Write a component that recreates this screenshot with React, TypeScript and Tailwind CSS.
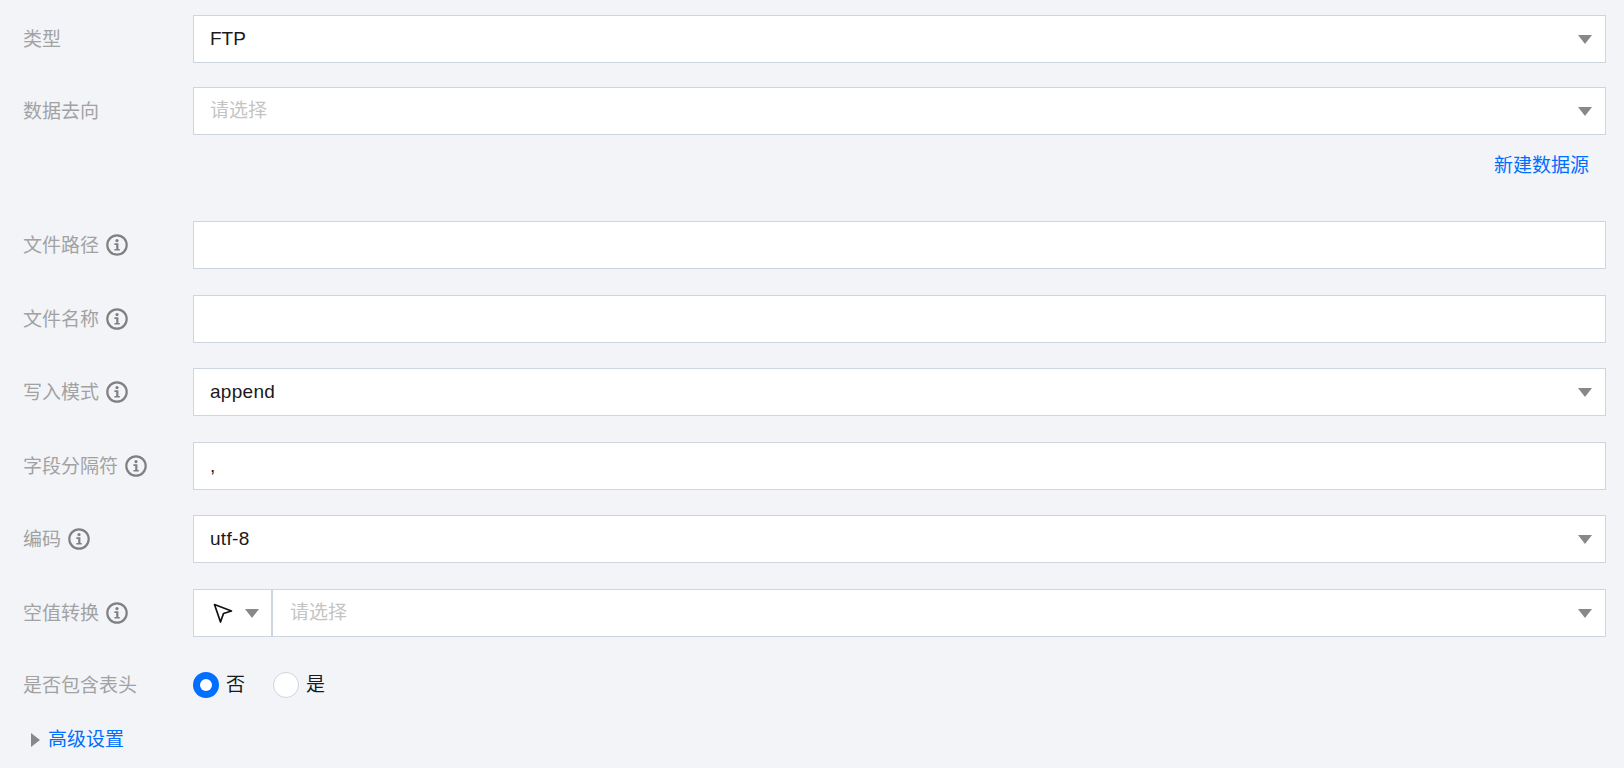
import React from "react";

const Caret = () => (
  <svg width="14" height="9" viewBox="0 0 14 9" className="shrink-0">
    <path d="M0 0H14L7 9Z" fill="#888888" />
  </svg>
);

const InfoIcon = () => (
  <svg width="22" height="22" viewBox="0 0 22 22" className="ml-[7px] shrink-0">
    <circle cx="11" cy="11" r="9.7" fill="none" stroke="#808080" strokeWidth="2.2" />
    <circle cx="11" cy="6.6" r="1.6" fill="#808080" />
    <path d="M8.4 9.3H12.4V15H13.8V16.6H8.4V15H10.2V10.9H8.4Z" fill="#808080" />
  </svg>
);

const Label = ({ text, info }: { text: string; info?: boolean }) => (
  <div className="flex w-[193px] shrink-0 items-center pl-[23px] text-[19px] text-[#a2a2a2]">
    <span className="pt-[2px]">{text}</span>
    {info && <InfoIcon />}
  </div>
);

const Box = ({ children }: { children?: React.ReactNode }) => (
  <div className="flex h-[48px] flex-1 items-center justify-between border border-[#cfd5de] bg-white pl-[16px] pr-[13px] text-[19px] text-[#1a1a1a]">
    {children}
  </div>
);

const Select = ({ value, wide }: { value?: string; wide?: boolean }) => (
  <Box>
    {value ? (
      <span className={wide ? "tracking-[0.3px]" : ""}>{value}</span>
    ) : (
      <span className="pt-px text-[#c4c4c4]">请选择</span>
    )}
    <Caret />
  </Box>
);

const Row = ({ className, children }: { className?: string; children: React.ReactNode }) => (
  <div className={`flex items-center pr-[18px] ${className ?? ""}`}>{children}</div>
);

export default function App() {
  return (
    <div
      className="h-[768px] w-[1624px] overflow-hidden bg-[#f2f4f8] pt-[15px]"
      style={{ fontFamily: '"Liberation Sans", "Noto Sans CJK SC", sans-serif' }}
    >
      <Row>
        <Label text="类型" />
        <Select value="FTP" />
      </Row>
      <Row className="mt-[24px]">
        <Label text="数据去向" />
        <Select />
      </Row>
      <div className="mt-[17px] flex h-[27px] justify-end pr-[35px] text-[19px] leading-[27px] text-[#006eff]">
        新建数据源
      </div>
      <Row className="mt-[42px]">
        <Label text="文件路径" info />
        <Box />
      </Row>
      <Row className="mt-[26px]">
        <Label text="文件名称" info />
        <Box />
      </Row>
      <Row className="mt-[25px]">
        <Label text="写入模式" info />
        <Select value="append" wide />
      </Row>
      <Row className="mt-[26px]">
        <Label text="字段分隔符" info />
        <Box>
          <span>,</span>
        </Box>
      </Row>
      <Row className="mt-[25px]">
        <Label text="编码" info />
        <Select value="utf-8" wide />
      </Row>
      <Row className="mt-[26px]">
        <Label text="空值转换" info />
        <div className="flex h-[48px] w-[80px] shrink-0 items-center border border-r-2 border-[#cfd5de] bg-white pl-[19px]">
          <svg width="20" height="21" viewBox="0 0 20 21" className="shrink-0">
            <path d="M1.5 1.5L18.5 8L10.5 10.5L7.5 19Z" fill="none" stroke="#111111" strokeWidth="1.7" strokeLinejoin="round" />
          </svg>
          <span className="ml-[12px]">
            <Caret />
          </span>
        </div>
        <div className="flex h-[48px] flex-1 items-center justify-between border border-l-0 border-[#cfd5de] bg-white pl-[17px] pr-[13px] text-[19px] text-[#c4c4c4]">
          <span className="pt-px">请选择</span>
          <Caret />
        </div>
      </Row>
      <Row className="mt-[33px]">
        <Label text="是否包含表头" />
        <div className="flex items-center text-[19px] text-[#1a1a1a]">
          <span className="flex size-[26px] items-center justify-center rounded-full bg-[#006eff]">
            <span className="size-[12px] rounded-full bg-white" />
          </span>
          <span className="ml-[7px]">否</span>
          <span className="ml-[28px] size-[26px] rounded-full border border-[#cfd5de] bg-white" />
          <span className="ml-[7px]">是</span>
        </div>
      </Row>
      <div className="mt-[25px] flex items-center pl-[31px] text-[19px] text-[#006eff]">
        <svg width="9" height="14" viewBox="0 0 9 14" className="shrink-0">
          <path d="M0 0V14L9 7Z" fill="#888888" />
        </svg>
        <span className="ml-[8px]">高级设置</span>
      </div>
    </div>
  );
}
